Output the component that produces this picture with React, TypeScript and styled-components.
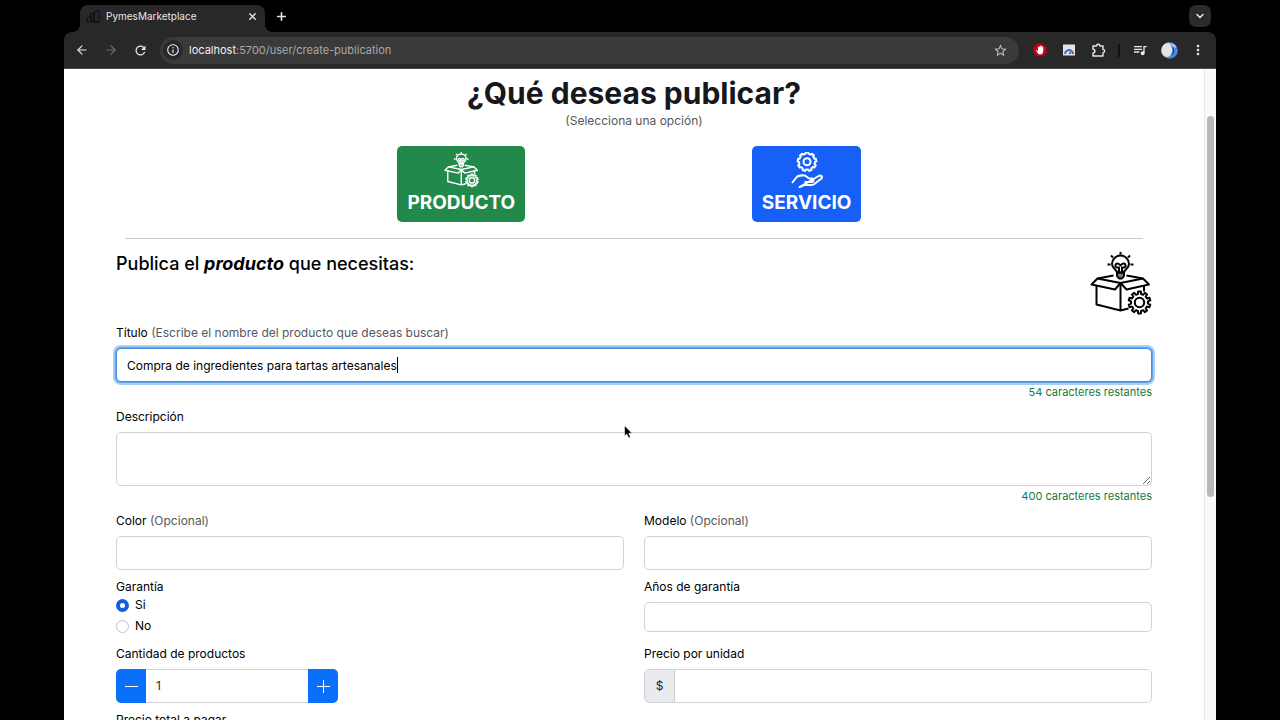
import React from "react";
import styled, { createGlobalStyle, css } from "styled-components";
import { LuArrowLeft, LuArrowRight, LuX, LuPlus, LuChevronDown } from "react-icons/lu";
import {
  MdRefresh,
  MdInfoOutline,
  MdStarBorder,
  MdOutlineQueueMusic,
  MdMoreVert,
} from "react-icons/md";

const GlobalStyle = createGlobalStyle`
  *, *::before, *::after { box-sizing: border-box; }
  body {
    margin: 0;
    background: #000;
    color: #000;
    font: 400 12px/20px Inter, "Liberation Sans", sans-serif;
  }
  button, input, textarea { font: inherit; color: inherit; }
`;

const Browser = styled.div`
  position: relative;
  display: flex;
  flex-direction: column;
  height: 100vh;
  margin: 0 5%;
  overflow: hidden;
`;

/* ---- browser chrome ---- */

const TabStrip = styled.div`
  display: flex;
  align-items: flex-end;
  flex: none;
  height: 32px;
  padding: 0 5px 0 16px;
`;

const Tab = styled.div`
  position: relative;
  display: flex;
  align-items: center;
  gap: 6px;
  width: 185px;
  height: 27px;
  padding: 0 6px 5px;
  border-radius: 8px 8px 0 0;
  background: #282828;
  color: #e6e6e6;
  font-size: 10px;
  line-height: 16px;

  &::before,
  &::after {
    content: "";
    position: absolute;
    bottom: 0;
    width: 8px;
    height: 8px;
  }
  &::before {
    right: 100%;
    background: radial-gradient(circle at 0 0, transparent 8px, #282828 8px);
  }
  &::after {
    left: 100%;
    background: radial-gradient(circle at 100% 0, transparent 8px, #282828 8px);
  }
`;

const TabTitle = styled.span`
  flex: 1;
  white-space: nowrap;
`;

const IconButton = styled.button<{ $size?: number; $color?: string }>`
  display: flex;
  align-items: center;
  justify-content: center;
  flex: none;
  width: ${(p) => p.$size ?? 20}px;
  height: ${(p) => p.$size ?? 20}px;
  padding: 0;
  border: 0;
  background: none;
  color: ${(p) => p.$color ?? "#e6e6e6"};
`;

const NewTabButton = styled(IconButton)`
  margin: 0 0 6px 6px;
`;

const TabSearchButton = styled(IconButton)`
  margin: 0 0 5px auto;
  border-radius: 7px;
  background: #2b2b2b;
`;

const Toolbar = styled.div`
  display: flex;
  align-items: center;
  flex: none;
  height: 37px;
  padding: 0 8px;
  border-bottom: 1px solid #4a4a4a;
  border-radius: 8px 8px 0 0;
  background: #282828;
`;

const NavGroup = styled.div`
  display: flex;
  gap: 9px;
  margin-right: 10px;
`;

const AddressBar = styled.div`
  display: flex;
  align-items: center;
  flex: 1;
  height: 27px;
  padding: 0 9px 0 3px;
  border-radius: 14px;
  background: #3a3a3a;
`;

const SiteInfoButton = styled(IconButton)`
  border-radius: 50%;
  background: #282828;
`;

const Url = styled.span`
  flex: 1;
  margin-left: 6px;
  color: #a8a8a8;
  font-size: 11px;
  line-height: 16px;

  b {
    color: #f0f0f0;
    font-weight: 400;
  }
`;

const Extensions = styled.div`
  display: flex;
  align-items: center;
  gap: 9px;
  margin-left: 11px;
`;

const ToolbarDivider = styled.span`
  width: 2px;
  height: 13px;
  margin: 0 1px;
  background: #111;
`;

/* ---- page ---- */

const Viewport = styled.div`
  display: flex;
  flex: 1;
  min-height: 0;
  background: #fff;
`;

const Page = styled.main`
  flex: 1;
  min-width: 0;
  padding: 6px 52px 0;
  overflow: hidden;
`;

const ScrollTrack = styled.div`
  flex: none;
  width: 12px;
  padding: 47px 2px 0;
  border-left: 1px solid #e6e6e6;
  background: #fafafa;
`;

const ScrollThumb = styled.div`
  width: 7px;
  height: 63%;
  border-radius: 4px;
  background: #b8b8b8;
`;

const PageTitle = styled.h1`
  margin: 0;
  color: #16181b;
  font-size: 30px;
  font-weight: 700;
  line-height: 36px;
  text-align: center;
`;

const Subtitle = styled.p`
  margin: 0;
  color: #54585c;
  text-align: center;
`;

const Choices = styled.div`
  display: grid;
  grid-template-columns: 1fr 1fr;
  justify-items: center;
  margin: 15px 16.67% 16px;
`;

const ChoiceButton = styled.button<{ $color: string }>`
  display: flex;
  flex-direction: column;
  align-items: center;
  height: 76px;
  padding: 6px 10px 4px;
  border: 0;
  border-radius: 5px;
  background: ${(p) => p.$color};
  color: #fff;
  font-size: 19px;
  font-weight: 700;
  line-height: 30px;
`;

const Divider = styled.hr`
  height: 1px;
  margin: 0 9px;
  border: 0;
  background: #c8c9ca;
`;

const FormHeader = styled.div`
  display: flex;
  justify-content: space-between;
  padding: 13px 0 7px;
`;

const FormTitle = styled.h2`
  margin: 0;
  font-size: 18px;
  font-weight: 500;
  line-height: 24px;

  em {
    font-weight: 700;
  }
`;

const Field = styled.div`
  display: flex;
  flex-direction: column;
`;

const Label = styled.label`
  margin-bottom: 5px;

  small {
    color: #54585c;
    font-size: inherit;
  }
`;

const control = css`
  width: 100%;
  border: 1px solid #ced2d6;
  border-radius: 5px;
  background: #fff;
  outline: 0;
`;

const TextInput = styled.input<{ $active?: boolean; $compact?: boolean }>`
  ${control}
  height: ${(p) => (p.$compact ? 30 : 34)}px;
  padding: 0 10px;
  ${(p) =>
    p.$active &&
    css`
      border-color: #4a8fdd;
      box-shadow: 0 0 0 1px #62a2e8, 0 0 0 3px #a5cdf8;
    `}
`;

const InputWrap = styled.div`
  position: relative;
  display: flex;
`;

const Caret = styled.span`
  position: absolute;
  top: 9px;
  left: 281px;
  width: 1px;
  height: 16px;
  background: #000;
`;

const TextArea = styled.textarea`
  ${control}
  display: block;
  height: 54px;
  padding: 6px 10px;
  resize: vertical;
`;

const Counter = styled.span`
  margin-bottom: 5px;
  color: #147a42;
  font-size: 11px;
  text-align: right;
`;

const Row = styled.div`
  display: grid;
  grid-template-columns: 1fr 1fr;
  column-gap: 20px;
  margin-bottom: 7px;
`;

const RadioGroup = styled.fieldset`
  display: flex;
  flex-direction: column;
  gap: 5px;
  margin: 0;
  padding: 0 0 3px;
  border: 0;

  legend {
    padding: 0;
  }
`;

const RadioLabel = styled.label`
  display: flex;
  align-items: center;
  gap: 6px;
  line-height: 16px;
`;

const Radio = styled.input`
  appearance: none;
  width: 13px;
  height: 13px;
  margin: 0;
  border: 1px solid #c3c6ca;
  border-radius: 50%;
  background: #fff;

  &:checked {
    border: 4px solid #0f5fe6;
  }
`;

const InputGroup = styled.div<{ $width?: string }>`
  display: flex;
  width: ${(p) => p.$width ?? "100%"};
  height: 34px;
  border-radius: 5px;
  overflow: hidden;

  input {
    flex: 1;
    min-width: 0;
    padding: 0 10px;
    border: 1px solid #ced2d6;
    border-left: 0;
    border-radius: 0 5px 5px 0;
    outline: 0;
    background: #fff;
    color: #24282c;
  }
`;

const StepperGroup = styled(InputGroup)`
  input {
    border-right: 0;
    border-radius: 0;
  }
`;

const StepButton = styled.button`
  display: flex;
  align-items: center;
  justify-content: center;
  width: 30px;
  padding: 0;
  border: 0;
  background: #0a70fa;
  color: #fff;
`;

const Prefix = styled.span`
  display: flex;
  align-items: center;
  justify-content: center;
  width: 31px;
  border: 1px solid #ced2d6;
  border-radius: 5px 0 0 5px;
  background: #e9eaed;
  color: #24282c;
`;

const Pointer = styled.svg`
  position: absolute;
  top: 425px;
  left: 49%;
  margin-left: -4px;
`;

/* ---- drawings ---- */

function cogPath(cx: number, cy: number, inner: number, outer: number, teeth: number) {
  const step = (Math.PI * 2) / teeth;
  const at = (radius: number, angle: number) =>
    `${(cx + radius * Math.cos(angle)).toFixed(2)} ${(cy + radius * Math.sin(angle)).toFixed(2)}`;
  const points: string[] = [];
  for (let i = 0; i < teeth; i++) {
    const a = i * step - Math.PI / 2;
    points.push(at(inner, a - step * 0.3), at(outer, a - step * 0.2), at(outer, a + step * 0.2), at(inner, a + step * 0.3));
  }
  return `M${points.join("L")}Z`;
}

function ProductIcon({ size, stroke = 2 }: { size: number; stroke?: number }) {
  return (
    <svg width={size} height={size} viewBox="0 0 64 64" fill="none" stroke="currentColor" strokeWidth={stroke} strokeLinejoin="round" aria-hidden="true">
      <path d="M32.500 0v2.500M19.500 12.500h3M42.500 12.500h3M23 3.500l2 2M42 3.500l-2 2" />
      <path d="M29 20.500c0-3-5-4-5-8.500a8.500 8.500 0 0 1 17 0c0 4.500-5 5.500-5 8.500z" />
      <path d="M31 20v-4.500h-1.500c-3 0-2.500-4 0-4 1.500 0 2 1 3 2 1-1 1.500-2 3-2 2.500 0 3 4 0 4H34V20" />
      <path d="M29 20.500h7V24l-2 2.500h-3L29 24z" fill="currentColor" fillOpacity=".5" />
      <path d="M25.500 23.500L9.500 26.500 3.500 32.500 27 37.500l5.500-6.500 6 6.500 22.500-5-6-6-16.500-3" />
      <path d="M9.500 26.500l23 4.500L55 26.500M8.500 34v18.500l24 6 8-2M32.500 31v27.500M56 34v5.500" />
      <path d={cogPath(51.5, 50.5, 8.5, 11, 10)} />
      <circle cx="51.500" cy="50.500" r="4.700" />
    </svg>
  );
}

function ServiceIcon() {
  return (
    <svg width="36" height="36" viewBox="0 0 36 36" fill="none" stroke="currentColor" strokeWidth="2" strokeLinejoin="round" aria-hidden="true">
      <path d={cogPath(18, 9.7, 8, 9.4, 9)} />
      <circle cx="18" cy="9.700" r="3.500" />
      <path d="M3 31l5.200-6.500q3.500-1.500 7.800-1l4 3h3.500q2 1.500 0 3.500h-8M24.500 27l6-3.500q3.500 0 2 3L25 32.300q-1 .7-3 .7h-7l-4.500 2.200z" />
    </svg>
  );
}

function PuzzleIcon() {
  return (
    <svg width="15" height="15" viewBox="0 0 15 15" fill="none" stroke="currentColor" strokeWidth="1.400" strokeLinejoin="round" aria-hidden="true">
      <path d="M2 3h3.500a1.700 1.700 0 0 1 3.400 0H12v3.400a1.600 1.600 0 0 1 0 3.200V13H2v-3a1.900 1.900 0 0 0 0-3.800z" />
    </svg>
  );
}

function Favicon() {
  return (
    <svg width="14" height="14" viewBox="0 0 14 14" fill="none" stroke="#0c0c0c" aria-hidden="true">
      <path d="M1 13V9l4-2v6M5 13V4.500h3V13M8 13V3l5-2v12zM1 13h12" />
    </svg>
  );
}

function BlockerIcon() {
  return (
    <svg width="14" height="14" viewBox="0 0 14 14" aria-hidden="true">
      <path d="M4.200 0.500h5.600l3.700 3.700v5.600l-3.700 3.700H4.200L.5 9.800V4.200z" fill="#c4001a" />
      <path d="M5 4v4l-1.200-1q-1 0-.3 1l2 3.200h3.600L10.300 8V4.300q-.6-.5-.9 0V3.200q-.6-.5-1 0v-.5q-.6-.5-1 0v.6q-.8-.5-1 0V4Q5.500 3.500 5 4z" fill="#fff" />
    </svg>
  );
}

function GaugeIcon() {
  return (
    <svg width="14" height="14" viewBox="0 0 14 14" aria-hidden="true">
      <rect x="1" y="1.500" width="12" height="11" fill="#dfe3ea" />
      <path d="M3 11a4 4 0 0 1 6-3.400" fill="none" stroke="#3d68c8" strokeWidth="2" />
      <path d="M9 7.600A4 4 0 0 1 11 11" fill="none" stroke="#c43a48" strokeWidth="2" />
      <path d="M6.500 11l2-3 .5 3z" fill="#48587a" />
    </svg>
  );
}

function Avatar() {
  return (
    <svg width="17" height="17" viewBox="0 0 17 17" aria-hidden="true">
      <circle cx="8.500" cy="8.500" r="8.300" fill="#4c86e0" />
      <path d="M8 .8C3 1 .4 4.500.4 8.500c0 4 2.600 6 5.600 6.500 2 0 4-1.500 4.500-3.500 1.500-3 .5-8-2.500-10.700z" fill="#e4e4e2" />
      <path d="M11 5q2 3.500.3 6.500l-1.800 1 2 .5q3-4 .5-8.500z" fill="#1e3f78" />
      <path d="M9 1q5 .5 6.500 5l-3.500-1z" fill="#a9ccf8" />
    </svg>
  );
}

export default function App() {
  return (
    <>
      <GlobalStyle />
      <Browser>
        <TabStrip>
          <Tab>
            <Favicon />
            <TabTitle>PymesMarketplace</TabTitle>
            <IconButton $size={14} aria-label="Cerrar pestaña">
              <LuX size={11} strokeWidth={3} />
            </IconButton>
          </Tab>
          <NewTabButton aria-label="Nueva pestaña">
            <LuPlus size={13} strokeWidth={3} />
          </NewTabButton>
          <TabSearchButton $size={22} aria-label="Buscar pestañas">
            <LuChevronDown size={12} strokeWidth={3} />
          </TabSearchButton>
        </TabStrip>

        <Toolbar>
          <NavGroup>
            <IconButton aria-label="Atrás">
              <LuArrowLeft size={14} />
            </IconButton>
            <IconButton $color="#6e6e6e" aria-label="Adelante">
              <LuArrowRight size={14} />
            </IconButton>
            <IconButton aria-label="Recargar">
              <MdRefresh size={15} />
            </IconButton>
          </NavGroup>
          <AddressBar>
            <SiteInfoButton aria-label="Información del sitio">
              <MdInfoOutline size={14} />
            </SiteInfoButton>
            <Url>
              <b>localhost</b>:5700/user/create-publication
            </Url>
            <IconButton $color="#c4c4c4" aria-label="Añadir a favoritos">
              <MdStarBorder size={15} />
            </IconButton>
          </AddressBar>
          <Extensions>
            <IconButton aria-label="Bloqueador">
              <BlockerIcon />
            </IconButton>
            <IconButton aria-label="Rendimiento">
              <GaugeIcon />
            </IconButton>
            <IconButton aria-label="Extensiones">
              <PuzzleIcon />
            </IconButton>
            <ToolbarDivider />
            <IconButton aria-label="Control multimedia">
              <MdOutlineQueueMusic size={16} />
            </IconButton>
            <IconButton aria-label="Perfil">
              <Avatar />
            </IconButton>
            <IconButton aria-label="Menú">
              <MdMoreVert size={16} />
            </IconButton>
          </Extensions>
        </Toolbar>

        <Viewport>
          <Page>
            <PageTitle>¿Qué deseas publicar?</PageTitle>
            <Subtitle>(Selecciona una opción)</Subtitle>
            <Choices>
              <ChoiceButton $color="#218a4b">
                <ProductIcon size={36} stroke={2.5} />
                PRODUCTO
              </ChoiceButton>
              <ChoiceButton $color="#1660f8">
                <ServiceIcon />
                SERVICIO
              </ChoiceButton>
            </Choices>
            <Divider />

            <form>
              <FormHeader>
                <FormTitle>
                  Publica el <em>producto</em> que necesitas:
                </FormTitle>
                <ProductIcon size={64} />
              </FormHeader>

              <Field>
                <Label htmlFor="titulo">
                  Título <small>(Escribe el nombre del producto que deseas buscar)</small>
                </Label>
                <InputWrap>
                  <TextInput id="titulo" $active defaultValue="Compra de ingredientes para tartas artesanales" />
                  <Caret />
                </InputWrap>
                <Counter>54 caracteres restantes</Counter>
              </Field>

              <Field>
                <Label htmlFor="descripcion">Descripción</Label>
                <TextArea id="descripcion" />
                <Counter>400 caracteres restantes</Counter>
              </Field>

              <Row>
                <Field>
                  <Label htmlFor="color">
                    Color <small>(Opcional)</small>
                  </Label>
                  <TextInput id="color" />
                </Field>
                <Field>
                  <Label htmlFor="modelo">
                    Modelo <small>(Opcional)</small>
                  </Label>
                  <TextInput id="modelo" />
                </Field>
              </Row>

              <Row>
                <RadioGroup>
                  <legend>Garantía</legend>
                  <RadioLabel>
                    <Radio type="radio" name="garantia" defaultChecked />
                    Si
                  </RadioLabel>
                  <RadioLabel>
                    <Radio type="radio" name="garantia" />
                    No
                  </RadioLabel>
                </RadioGroup>
                <Field>
                  <Label htmlFor="anios">Años de garantía</Label>
                  <TextInput id="anios" $compact />
                </Field>
              </Row>

              <Row>
                <Field>
                  <Label htmlFor="cantidad">Cantidad de productos</Label>
                  <StepperGroup $width="222px">
                    <StepButton type="button" aria-label="Restar">
                      <svg width="14" height="14" stroke="currentColor" aria-hidden="true">
                        <path d="M1 7.500h13" />
                      </svg>
                    </StepButton>
                    <input id="cantidad" defaultValue="1" />
                    <StepButton type="button" aria-label="Sumar">
                      <svg width="14" height="14" stroke="currentColor" aria-hidden="true">
                        <path d="M1 7.500h13M7.500 1v13" />
                      </svg>
                    </StepButton>
                  </StepperGroup>
                </Field>
                <Field>
                  <Label htmlFor="precio">Precio por unidad</Label>
                  <InputGroup>
                    <Prefix>$</Prefix>
                    <input id="precio" />
                  </InputGroup>
                </Field>
              </Row>

              <Field>
                <Label htmlFor="total">Precio total a pagar</Label>
                <TextInput id="total" />
              </Field>
            </form>
          </Page>
          <ScrollTrack>
            <ScrollThumb />
          </ScrollTrack>
        </Viewport>

        <Pointer width="9" height="14" viewBox="0 0 9 14" aria-hidden="true">
          <path d="M.5.500v10.500l2.300-2 1.800 4 1.900-.8-1.700-3.900h3.200z" fill="#000" stroke="#fff" strokeWidth=".6" />
        </Pointer>
      </Browser>
    </>
  );
}
